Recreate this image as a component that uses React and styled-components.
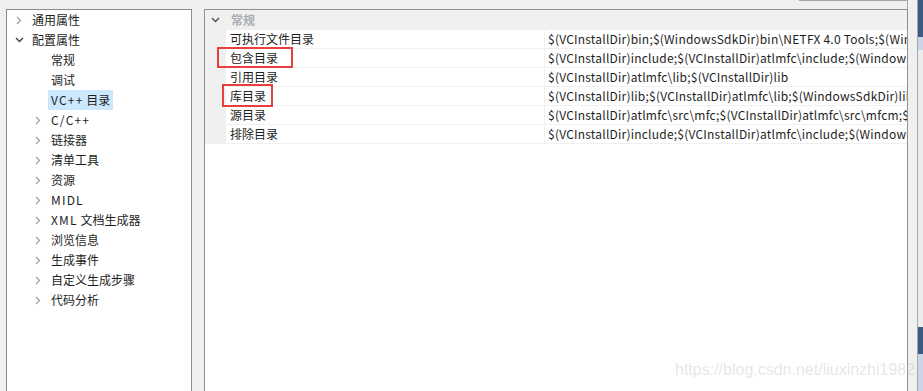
import React from "react";
import styled, { createGlobalStyle } from "styled-components";

const GlobalStyle = createGlobalStyle`
  html, body {
    margin: 0;
    padding: 0;
    background: #f0f0f0;
    overflow: hidden;
  }
  body {
    font-family: "Noto Sans CJK SC", "Noto Sans", sans-serif;
    font-size: 12px;
    color: #1e1e1e;
  }
`;

const Page = styled.div`
  position: relative;
  width: 923px;
  height: 391px;
  overflow: hidden;
  background: #f0f0f0;
`;

const TopBar = styled.div`
  height: 9px;
  display: flex;
  justify-content: flex-end;
  padding-right: 15px;
`;

const ComboStub = styled.div`
  width: 109px;
  height: 9px;
  box-sizing: border-box;
  border-top: 1px solid #a6a6a6;
  border-right: 1px solid #a6a6a6;
`;

const Body = styled.div`
  display: flex;
  align-items: flex-start;
  padding-left: 6px;
`;

const TreePanel = styled.div`
  box-sizing: border-box;
  width: 186px;
  height: 400px;
  border: 1px solid #8a8c91;
  background: #fff;
  display: flex;
  flex-direction: column;
`;

const TreeRow = styled.div`
  height: 20px;
  display: flex;
  align-items: center;
  padding-left: ${(p) => 4 + p.$level * 19}px;
`;

const ChevronBox = styled.span`
  width: 16px;
  height: 20px;
  display: flex;
  align-items: center;
  justify-content: center;
  flex: none;
`;

const TreeLabel = styled.span`
  margin-left: 2px;
  padding: 0 3px;
  line-height: 20px;
  white-space: nowrap;
  background: ${(p) => (p.$selected ? "#cce8ff" : "transparent")};
`;

const Latin = styled.span`
  letter-spacing: 1.2px;
`;

const GridPanel = styled.div`
  position: relative;
  box-sizing: border-box;
  margin-left: 12px;
  width: 704px;
  height: 400px;
  border: 1px solid #8e9095;
  background: #fff;
`;

const GroupHeader = styled.div`
  height: 20px;
  display: flex;
  align-items: center;
  background: #f0f0f0;
`;

const HeaderChevron = styled.span`
  width: 21px;
  height: 20px;
  display: flex;
  align-items: center;
  justify-content: center;
  flex: none;
`;

const HeaderLabel = styled.span`
  margin-left: 5px;
  color: #a9adb4;
  font-weight: 700;
  line-height: 20px;
`;

const PropRow = styled.div`
  display: grid;
  grid-template-columns: 21px 319px 1fr;
  height: 19px;
`;

const Gutter = styled.div`
  background: #f0f0f0;
`;

const NameCell = styled.div`
  box-sizing: border-box;
  padding-left: 4px;
  border-right: 1px solid #f0f0f0;
  border-bottom: 1px solid #f0f0f0;
  line-height: 18px;
  white-space: nowrap;
  overflow: hidden;
`;

const ValueCell = styled.div`
  box-sizing: border-box;
  padding-left: 3px;
  border-bottom: 1px solid #f0f0f0;
  line-height: 18px;
  letter-spacing: 0.22px;
  white-space: nowrap;
  overflow: hidden;
`;

const Callout = styled.div`
  position: absolute;
  left: ${(p) => p.$left}px;
  top: ${(p) => p.$top}px;
  width: ${(p) => p.$w}px;
  height: ${(p) => p.$h}px;
  box-sizing: border-box;
  border: 2px solid #e8403f;
  pointer-events: none;
`;

const EdgeStrip = styled.div`
  margin-left: 9px;
  width: 6px;
  height: 400px;
  margin-top: -9px;
  box-sizing: border-box;
  border-left: 1px solid #a8a8a8;
  background: linear-gradient(
    to bottom,
    #3b5a85 0 37px,
    #c9d6e6 37px 50px,
    #ececec 50px 327px,
    #3b5a85 327px 354px,
    #c9d6e6 354px
  );
`;

const Watermark = styled.div`
  position: absolute;
  left: 675px;
  top: 361px;
  font-family: "Liberation Sans", Arial, sans-serif;
  font-size: 16px;
  color: rgba(175, 175, 175, 0.32);
  white-space: nowrap;
  pointer-events: none;
`;

const Collapsed = () => (
  <svg width="6" height="9" viewBox="0 0 6 9">
    <path d="M1 1 L4.5 4.5 L1 8" fill="none" stroke="#a3a3a3" strokeWidth="1.3" />
  </svg>
);

const Expanded = ({ color = "#444" }) => (
  <svg width="9" height="6" viewBox="0 0 9 6">
    <path d="M1 1 L4.5 4.5 L8 1" fill="none" stroke={color} strokeWidth="1.4" />
  </svg>
);

const tree = [
  { label: "通用属性", level: 0, state: "collapsed" },
  { label: "配置属性", level: 0, state: "expanded" },
  { label: "常规", level: 1 },
  { label: "调试", level: 1 },
  { latin: "VC++", label: " 目录", level: 1, selected: true },
  { latin: "C/C++", label: "", level: 1, state: "collapsed" },
  { label: "链接器", level: 1, state: "collapsed" },
  { label: "清单工具", level: 1, state: "collapsed" },
  { label: "资源", level: 1, state: "collapsed" },
  { latin: "MIDL", label: "", level: 1, state: "collapsed" },
  { latin: "XML", label: " 文档生成器", level: 1, state: "collapsed" },
  { label: "浏览信息", level: 1, state: "collapsed" },
  { label: "生成事件", level: 1, state: "collapsed" },
  { label: "自定义生成步骤", level: 1, state: "collapsed" },
  { label: "代码分析", level: 1, state: "collapsed" },
];

const props = [
  {
    name: "可执行文件目录",
    value:
      "$(VCInstallDir)bin;$(WindowsSdkDir)bin\\NETFX 4.0 Tools;$(WindowsSdkDir)bin;$(VSInstallDir)Common7\\Tools\\bin;$(VSInstallDir)Common7\\tools",
  },
  {
    name: "包含目录",
    value:
      "$(VCInstallDir)include;$(VCInstallDir)atlmfc\\include;$(WindowsSdkDir)include;$(FrameworkSDKDir)\\include;",
  },
  { name: "引用目录", value: "$(VCInstallDir)atlmfc\\lib;$(VCInstallDir)lib" },
  {
    name: "库目录",
    value:
      "$(VCInstallDir)lib;$(VCInstallDir)atlmfc\\lib;$(WindowsSdkDir)lib;$(FrameworkSDKDir)\\lib",
  },
  {
    name: "源目录",
    value:
      "$(VCInstallDir)atlmfc\\src\\mfc;$(VCInstallDir)atlmfc\\src\\mfcm;$(VCInstallDir)atlmfc\\src\\atl;$(VCInstallDir)crt\\src;",
  },
  {
    name: "排除目录",
    value:
      "$(VCInstallDir)include;$(VCInstallDir)atlmfc\\include;$(WindowsSdkDir)include;$(FrameworkSDKDir)\\include;",
  },
];

export default function App() {
  return (
    <Page>
      <GlobalStyle />
      <TopBar>
        <ComboStub />
      </TopBar>
      <Body>
        <TreePanel>
          {tree.map((item) => (
            <TreeRow key={(item.latin || "") + item.label} $level={item.level}>
              <ChevronBox>
                {item.state === "collapsed" && <Collapsed />}
                {item.state === "expanded" && <Expanded />}
              </ChevronBox>
              <TreeLabel $selected={item.selected}>
                {item.latin && <Latin>{item.latin}</Latin>}
                {item.label}
              </TreeLabel>
            </TreeRow>
          ))}
        </TreePanel>
        <GridPanel>
          <GroupHeader>
            <HeaderChevron>
              <Expanded color="#4a4a4a" />
            </HeaderChevron>
            <HeaderLabel>常规</HeaderLabel>
          </GroupHeader>
          {props.map((p) => (
            <PropRow key={p.name}>
              <Gutter />
              <NameCell>{p.name}</NameCell>
              <ValueCell>{p.value}</ValueCell>
            </PropRow>
          ))}
          <Callout $left={12} $top={37} $w={76} $h={21} />
          <Callout $left={17} $top={74} $w={51} $h={23} />
        </GridPanel>
        <EdgeStrip />
      </Body>
      <Watermark>https://blog.csdn.net/liuxinzhi1982</Watermark>
    </Page>
  );
}
